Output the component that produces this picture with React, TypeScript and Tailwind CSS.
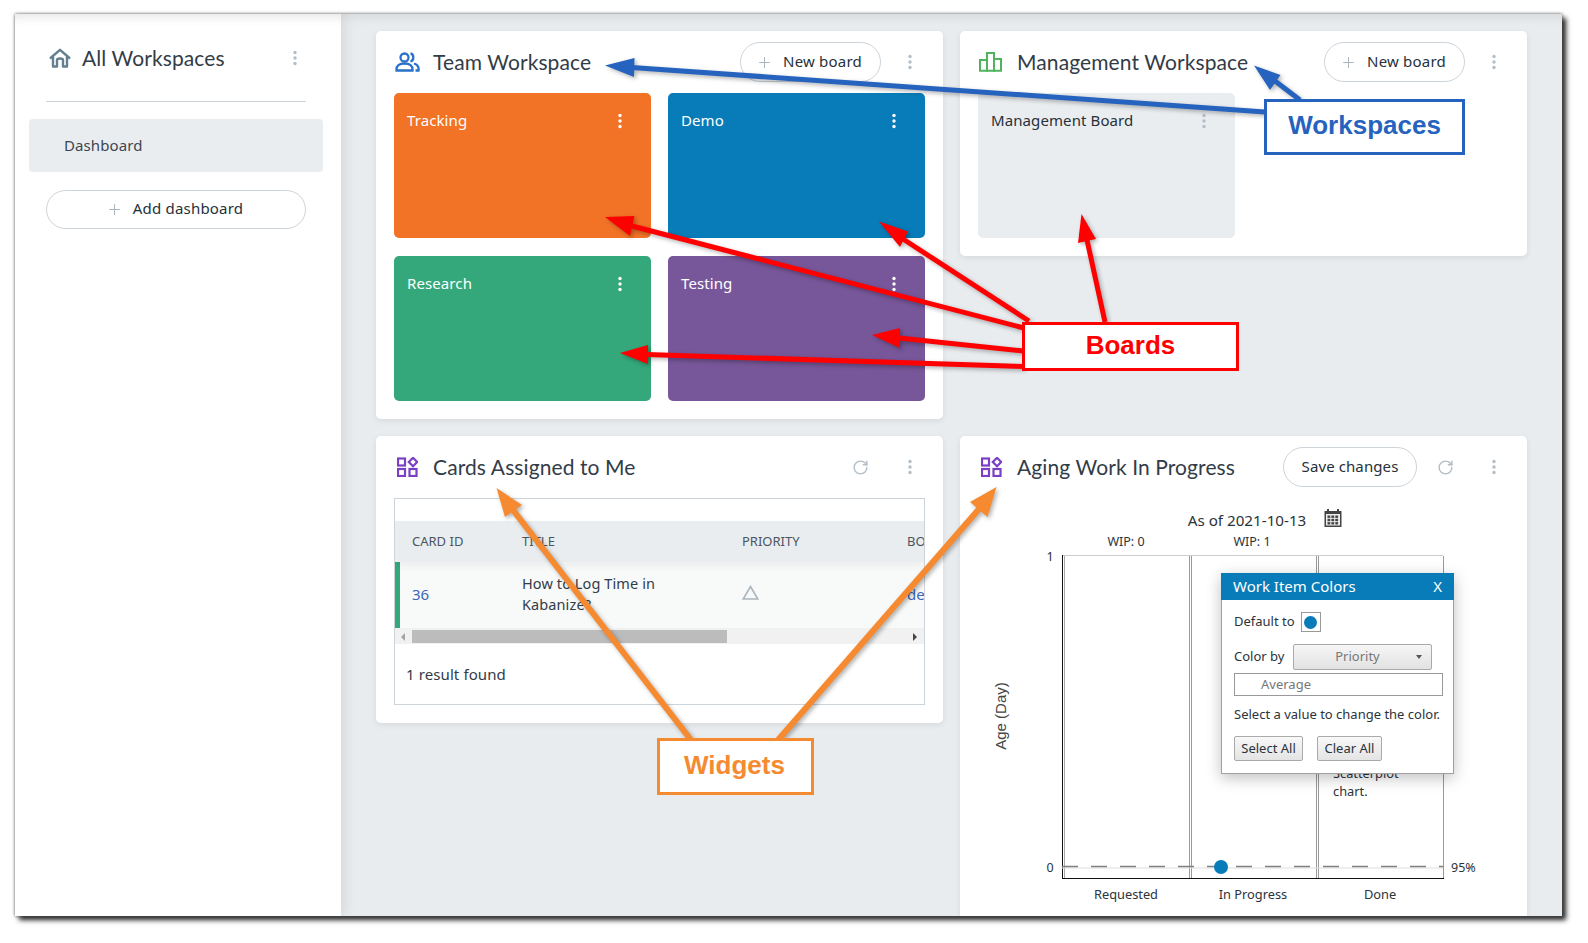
import React from "react";
import { Plus, RotateCw } from "lucide-react";

const body = "font-['Noto_Sans','Open_Sans',sans-serif]";
const heading = "font-['Lato','Noto_Sans',sans-serif]";

function Dots({ color = "#b4bec6" }: { color?: string }) {
  return (
    <svg width="6" height="16" viewBox="0 0 6 16" className="block shrink-0">
      <circle cx="3" cy="2.5" r="1.7" fill={color} />
      <circle cx="3" cy="8" r="1.7" fill={color} />
      <circle cx="3" cy="13.5" r="1.7" fill={color} />
    </svg>
  );
}

function HomeIcon() {
  return (
    <svg width="22" height="20" viewBox="0 0 22 20" fill="none" stroke="#64808f" strokeWidth="2.4" strokeLinejoin="round" className="shrink-0">
      <path d="M1 10.5 L11 1.8 L21 10.5" />
      <path d="M4 8.5 V18.5 H8 V12 Q8 10.5 11 10.5 Q14 10.5 14 12 V18.5 H18 V8.5" />
    </svg>
  );
}

function TeamIcon() {
  return (
    <svg width="25" height="20" viewBox="0 0 25 20" fill="none" stroke="#2a72c9" strokeWidth="2.3" className="shrink-0">
      <circle cx="9.5" cy="5.5" r="4" />
      <path d="M1.5 18.5 C1 13.5 4.5 11.5 9.5 11.5 C14.5 11.5 18 13.5 17.5 18.5 Z" />
      <path d="M15.5 1.5 C19 2 19.5 8.5 15.5 9.5" />
      <path d="M19 11.5 C22.5 12.5 24 15 23.5 18.5 H20.5" />
    </svg>
  );
}

function BarsIcon() {
  return (
    <svg width="23" height="20" viewBox="0 0 23 20" fill="none" stroke="#4fb45c" strokeWidth="2" className="shrink-0">
      <path d="M1 18.8 V8 H8 V18.8 Z" />
      <path d="M8 18.8 V1 H15 V18.8 Z" />
      <path d="M15 18.8 V7 H22 V18.8 Z" />
    </svg>
  );
}

function WidgetIcon() {
  return (
    <svg width="21" height="20" viewBox="0 0 21 20" fill="none" stroke="#7a3fc4" strokeWidth="2.2" className="shrink-0 ml-[2px]">
      <rect x="1" y="1.5" width="7" height="7" />
      <rect x="1" y="12" width="7" height="7" />
      <rect x="12.5" y="12" width="7" height="7" />
      <path d="M16 .8 L20.2 5 L16 9.2 L11.8 5 Z" />
    </svg>
  );
}

function CalendarIcon() {
  return (
    <svg width="18" height="18" viewBox="0 0 18 18" x="1324" y="509">
      <rect x="0.5" y="2" width="17" height="16" fill="#444" />
      <rect x="3" y="0" width="2" height="4" fill="#444" />
      <rect x="13" y="0" width="2" height="4" fill="#444" />
      <rect x="2" y="5" width="14" height="11.5" fill="#eee" />
      {[0, 1, 2].map((r) =>
        [0, 1, 2].map((c) => <rect key={r + "-" + c} x={3.5 + c * 3.9} y={6.5 + r * 3.3} width="2.8" height="2.4" fill="#444" />)
      )}
    </svg>
  );
}

function PillButton({ children, className }: { children: React.ReactNode; className: string }) {
  return (
    <div className={"h-10 pb-[2px] rounded-full border border-[#ccd4da] bg-white flex items-center justify-center shrink-0 text-[15px] text-[#26313a] " + body + " " + className}>
      {children}
    </div>
  );
}

function NewBoard({ className }: { className: string }) {
  return (
    <PillButton className={"pr-[3px] tracking-[0.2px] " + className}>
      <Plus size={17} strokeWidth={1.5} color="#a9b6bf" className="mr-[10px] mt-[2px]" />
      New board
    </PillButton>
  );
}

function Board({ name, color, light }: { name: string; color: string; light?: boolean }) {
  return (
    <div className={"w-[257px] h-[145px] rounded-[5px] flex items-start justify-between pl-[13px] pr-[28px] pt-[15px] " + color}>
      <span className={"text-[15px] tracking-[0.1px] leading-[24px] " + body + " " + (light ? "text-[#26313a]" : "text-white")}>{name}</span>
      <span className="mt-[5px]">
        <Dots color={light ? "#b4bec6" : "#ffffff"} />
      </span>
    </div>
  );
}

function CardHeader({ icon, title, children }: { icon: React.ReactNode; title: string; children?: React.ReactNode }) {
  return (
    <div className="h-[62px] flex items-center pl-[19px] pr-[30px] shrink-0">
      <span className="w-[38px] flex shrink-0">{icon}</span>
      <span className={"text-[21px] tracking-[0.1px] text-[#323c47] whitespace-nowrap flex-1 " + heading}>{title}</span>
      {children}
    </div>
  );
}

function Arrow({ color, tail, neck, tip, a, b, w = 5 }: { color: string; tail: number[]; neck: number[]; tip: number[]; a: number[]; b: number[]; w?: number }) {
  return (
    <g>
      <line x1={tail[0]} y1={tail[1]} x2={neck[0]} y2={neck[1]} stroke={color} strokeWidth={w} />
      <polygon points={tip.join(",") + " " + a.join(",") + " " + b.join(",")} fill={color} />
    </g>
  );
}

function Callout({ children, className }: { children: React.ReactNode; className: string }) {
  return (
    <div className={"absolute bg-white flex items-center justify-center font-bold font-['Liberation_Sans',sans-serif] " + className}>
      {children}
    </div>
  );
}

function Chart() {
  const t = { fontFamily: "'Noto Sans', sans-serif", fill: "#2b333b" };
  return (
    <svg width="567" height="418" viewBox="960 498 567 418" className="block">
      <text x="1247" y="526" textAnchor="middle" fontSize="15.2" style={t}>As of 2021-10-13</text>
      <CalendarIcon />
      <text x="1126" y="546" textAnchor="middle" fontSize="12.5" style={t}>WIP: 0</text>
      <text x="1252" y="546" textAnchor="middle" fontSize="12.5" style={t}>WIP: 1</text>
      <text x="1050" y="561" textAnchor="middle" fontSize="12.5" style={t}>1</text>
      <text x="1050" y="872" textAnchor="middle" fontSize="12.5" style={t}>0</text>
      <text x="1451" y="872" fontSize="12.5" style={t}>95%</text>
      <text transform="translate(1006 716) rotate(-90)" textAnchor="middle" fontSize="15" style={{ fontFamily: "'Liberation Sans', sans-serif", fill: "#444" }}>Age (Day)</text>
      <line x1="1062" y1="555.5" x2="1443" y2="555.5" stroke="#ccc" />
      <line x1="1189.5" y1="556" x2="1189.5" y2="878" stroke="#999" />
      <line x1="1191.5" y1="556" x2="1191.5" y2="878" stroke="#999" />
      <line x1="1316.5" y1="556" x2="1316.5" y2="878" stroke="#999" />
      <line x1="1318.5" y1="556" x2="1318.5" y2="878" stroke="#999" />
      <line x1="1443.5" y1="556" x2="1443.5" y2="878" stroke="#999" />
      <line x1="1064.5" y1="556" x2="1064.5" y2="878" stroke="#aaa" />
      <line x1="1062.5" y1="555" x2="1062.5" y2="878.5" stroke="#111" />
      <line x1="1062" y1="878.5" x2="1444" y2="878.5" stroke="#111" />
      <line x1="1062" y1="868" x2="1443" y2="868" stroke="#ddd" />
      <line x1="1062" y1="866.5" x2="1443" y2="866.5" stroke="#808080" strokeWidth="1.5" strokeDasharray="16 13" />
      <circle cx="1221" cy="867" r="7" fill="#087cb8" />
      <text x="1126" y="899" textAnchor="middle" fontSize="12.8" style={t}>Requested</text>
      <text x="1253" y="899" textAnchor="middle" fontSize="12.8" style={t}>In Progress</text>
      <text x="1380" y="899" textAnchor="middle" fontSize="12.8" style={t}>Done</text>
      <text x="1333" y="778" fontSize="12.8" style={t}>Scatterplot</text>
      <text x="1333" y="796" fontSize="12.8" style={t}>chart.</text>
    </svg>
  );
}

function Popup() {
  return (
    <div className={"absolute left-[261px] top-[75px] w-[233px] h-[201px] bg-white border border-[#a0a0a0] shadow-[0_4px_14px_rgba(0,0,0,0.25)] text-[13px] text-[#2b333b] " + body}>
      <div className="h-[27px] -mt-px -mx-px bg-[#087cb8] text-white flex items-center justify-between pl-[12px] pr-[12px] text-[15px]">
        <span>Work Item Colors</span>
        <span>X</span>
      </div>
      <div className="pl-[12px] pr-[12px] flex flex-col">
        <div className="flex items-center gap-[6px] mt-[12px] h-5">
          <span>Default to</span>
          <span className="w-5 h-5 border border-[#999] flex items-center justify-center">
            <span className="w-[13px] h-[13px] rounded-full bg-[#087cb8]" />
          </span>
        </div>
        <div className="flex items-center mt-[12px] h-[26px]">
          <span className="w-[59px]">Color by</span>
          <span className="relative w-[139px] h-[26px] rounded-[2px] border border-[#aaa] bg-gradient-to-b from-[#f6f6f6] to-[#e2e2e2] text-[#777] flex items-center justify-center pr-[10px]">
            Priority
            <span className="absolute right-[9px] top-[10px] w-0 h-0 border-x-[3px] border-x-transparent border-t-[4px] border-t-[#555]" />
          </span>
        </div>
        <div className="h-[23px] w-[209px] mt-[3px] border border-[#999] flex items-center pl-[26px] text-[#777]">Average</div>
        <div className="mt-[9px] whitespace-nowrap leading-[18px]">Select a value to change the color.</div>
        <div className="flex gap-[14px] mt-[13px]">
          <span className="w-[69px] h-[25px] rounded-[2px] border border-[#aaa] bg-gradient-to-b from-[#f8f8f8] to-[#e4e4e4] flex items-center justify-center">Select All</span>
          <span className="w-[65px] h-[25px] rounded-[2px] border border-[#aaa] bg-gradient-to-b from-[#f8f8f8] to-[#e4e4e4] flex items-center justify-center">Clear All</span>
        </div>
      </div>
    </div>
  );
}

function CardsTable() {
  return (
    <div className={"mx-[18px] h-[207px] w-[531px] border border-[#ccd4da] overflow-hidden flex flex-col " + body}>
      <div className="h-[22px] shrink-0" />
      <div className="relative z-10 h-[41px] shrink-0 bg-[#eaedf0] flex items-center text-[13px] text-[#4a5560] shadow-[0_4px_8px_rgba(0,0,0,0.05)] whitespace-nowrap">
        <span className="w-[110px] pl-[17px] shrink-0">CARD ID</span>
        <span className="w-[220px] pl-[17px] shrink-0">TITLE</span>
        <span className="w-[165px] pl-[17px] shrink-0">PRIORITY</span>
        <span className="pl-[17px]">BOARD</span>
      </div>
      <div className="h-[66px] pb-[2px] shrink-0 bg-[#f8f9f9] flex items-center border-l-[5px] border-l-[#34a87b] text-[15px] whitespace-nowrap">
        <span className="w-[105px] pl-[12px] shrink-0 text-[#3b66b8]">36</span>
        <span className="w-[220px] pl-[17px] shrink-0 text-[14.5px] tracking-[0.1px] leading-[21.5px] text-[#323c47] whitespace-normal">How to Log Time in<br />Kabanize?</span>
        <span className="w-[165px] pl-[17px] shrink-0 pb-[4px]">
          <svg width="17" height="15" viewBox="0 0 17 15" fill="none" stroke="#aab6bf" strokeWidth="1.6" className="block"><path d="M8.5 1.5 L15.8 14 H1.2 Z" /></svg>
        </span>
        <span className="pl-[17px] text-[#3b66b8]">demo</span>
      </div>
      <div className="relative h-4 shrink-0 bg-[#f1f1f1] flex items-center">
        <span className="absolute left-[6px] top-[5px] w-0 h-0 border-y-[4px] border-y-transparent border-r-[4px] border-r-[#a3a3a3]" />
        <span className="absolute left-[17px] top-[2px] w-[315px] h-[13px] bg-[#bcbcbc]" />
        <span className="absolute right-[7px] top-[5px] w-0 h-0 border-y-[4px] border-y-transparent border-l-[4px] border-l-[#444]" />
      </div>
      <div className="flex-1 pl-[11px] pt-[19px] text-[15px] tracking-[0.1px] leading-[22px] text-[#323c47]">1 result found</div>
    </div>
  );
}

export default function App() {
  const red = "#ff0000";
  const blue = "#2563be";
  const orange = "#f58a31";
  const cardShadow = "shadow-[0_2px_6px_rgba(0,0,0,0.08)]";
  return (
    <div className="relative w-[1588px] h-[943px] bg-white overflow-hidden pt-[14px] pl-[15px]">
      <div className="relative w-[1547px] h-[902px] flex overflow-hidden bg-[#e9ecef] shadow-[0_0_3px_#555,4px_4px_5px_#222]">
        <aside className="relative z-10 w-[326px] shrink-0 bg-white shadow-[2px_0_14px_rgba(0,0,0,0.1),inset_0_12px_12px_-10px_rgba(0,0,0,0.12)] flex flex-col pl-[14px]">
          <div className="h-[87px] pl-[20px] pr-[43px] flex items-center shrink-0 pt-[1px]">
            <span className="w-[33px] flex shrink-0"><HomeIcon /></span>
            <span className={"flex-1 text-[21px] tracking-[0.1px] text-[#323c47] " + heading}>All Workspaces</span>
            <Dots />
          </div>
          <div className="ml-[17px] w-[260px] h-px bg-[#ccd4da] shrink-0" />
          <div className={"mt-[17px] w-[294px] h-[53px] pb-[1px] rounded-[4px] bg-[#eaedf0] flex items-center pl-[35px] text-[15px] tracking-[0.1px] text-[#3c4650] shrink-0 " + body}>Dashboard</div>
          <div className="mt-[18px] ml-[17px]">
            <PillButton className="w-[260px] !h-[39px] pr-[3px] tracking-[0.2px]">
              <Plus size={17} strokeWidth={1.5} color="#a9b6bf" className="mr-[10px] mt-[2px]" />
              Add dashboard
            </PillButton>
          </div>
        </aside>
        <main className="flex-1 min-w-0 grid grid-cols-[567px_567px] grid-rows-[388px_1fr] gap-[17px] pl-[35px] pt-[17px] shadow-[inset_0_12px_12px_-10px_rgba(0,0,0,0.1)]">
          <section className={"bg-white rounded-[5px] flex flex-col " + cardShadow}>
            <CardHeader icon={<TeamIcon />} title="Team Workspace">
              <NewBoard className="w-[141px] mr-[26px]" />
              <Dots />
            </CardHeader>
            <div className="grid grid-cols-[257px_257px] gap-x-[17px] gap-y-[18px] pl-[18px]">
              <Board name="Tracking" color="bg-[#f37326]" />
              <Board name="Demo" color="bg-[#087cb8]" />
              <Board name="Research" color="bg-[#34a87b]" />
              <Board name="Testing" color="bg-[#775799]" />
            </div>
          </section>
          <section className={"bg-white rounded-[5px] h-[225px] self-start flex flex-col " + cardShadow}>
            <CardHeader icon={<BarsIcon />} title="Management Workspace">
              <NewBoard className="w-[141px] mr-[26px]" />
              <Dots />
            </CardHeader>
            <div className="pl-[18px]">
              <Board name="Management Board" color="bg-[#eaedf0]" light />
            </div>
          </section>
          <section className={"bg-white rounded-[5px] h-[287px] self-start flex flex-col " + cardShadow}>
            <CardHeader icon={<WidgetIcon />} title="Cards Assigned to Me">
              <RotateCw size={17} color="#b4bec6" strokeWidth={2} className="mr-[38px]" />
              <Dots />
            </CardHeader>
            <CardsTable />
          </section>
          <section className={"bg-white rounded-t-[5px] flex flex-col " + cardShadow}>
            <CardHeader icon={<WidgetIcon />} title="Aging Work In Progress">
              <PillButton className="w-[134px] mr-[20px] tracking-[0.1px]">Save changes</PillButton>
              <RotateCw size={17} color="#b4bec6" strokeWidth={2} className="mr-[37px]" />
              <Dots />
            </CardHeader>
            <div className="relative">
              <Chart />
              <Popup />
            </div>
          </section>
        </main>
      </div>

      <svg width="1588" height="943" viewBox="0 0 1588 943" className="absolute inset-0 z-20 pointer-events-none [filter:drop-shadow(2px_2px_2px_rgba(0,0,0,0.3))]">
        <Arrow color={blue} tail={[1265, 112]} neck={[632, 67.5]} tip={[605, 65.5]} a={[634.5, 58]} b={[634, 77]} />
        <Arrow color={blue} tail={[1300, 100]} neck={[1275, 81]} tip={[1254, 65.5]} a={[1280.5, 75]} b={[1270, 90]} />
        <Arrow color={red} tail={[1024, 328]} neck={[632, 226]} tip={[605, 217]} a={[634.5, 216]} b={[630, 236]} />
        <Arrow color={red} tail={[1029, 321]} neck={[903, 239]} tip={[879, 221.5]} a={[908, 231.5]} b={[900, 247]} />
        <Arrow color={red} tail={[1024, 351]} neck={[899, 338]} tip={[872, 335]} a={[900, 328]} b={[900, 348]} />
        <Arrow color={red} tail={[1024, 366.5]} neck={[647, 354.5]} tip={[620, 353]} a={[648, 345]} b={[648, 364]} />
        <Arrow color={red} tail={[1105, 322]} neck={[1087, 240]} tip={[1081.5, 214]} a={[1078, 243]} b={[1096, 239]} />
        <Arrow color={orange} tail={[691, 740]} neck={[513, 510]} tip={[496.5, 488]} a={[522, 505]} b={[505, 517]} w={6} />
        <Arrow color={orange} tail={[778, 740]} neck={[979, 509]} tip={[996.5, 487]} a={[970, 502]} b={[987.5, 517]} w={6} />
      </svg>

      <Callout className="z-30 left-[1264px] top-[99px] w-[201px] h-[56px] pb-[4px] border-[3px] border-[#2563be] text-[#2563be] text-[26px]">Workspaces</Callout>
      <Callout className="z-30 left-[1022px] top-[322px] w-[217px] h-[49px] pb-[2px] border-[3px] border-[#ff0000] text-[#ff0000] text-[26px]">Boards</Callout>
      <Callout className="z-30 left-[657px] top-[738px] w-[157px] h-[57px] pb-[2px] pr-[2px] border-[3px] border-[#f58a31] text-[#f58a31] text-[26px]">Widgets</Callout>
    </div>
  );
}
